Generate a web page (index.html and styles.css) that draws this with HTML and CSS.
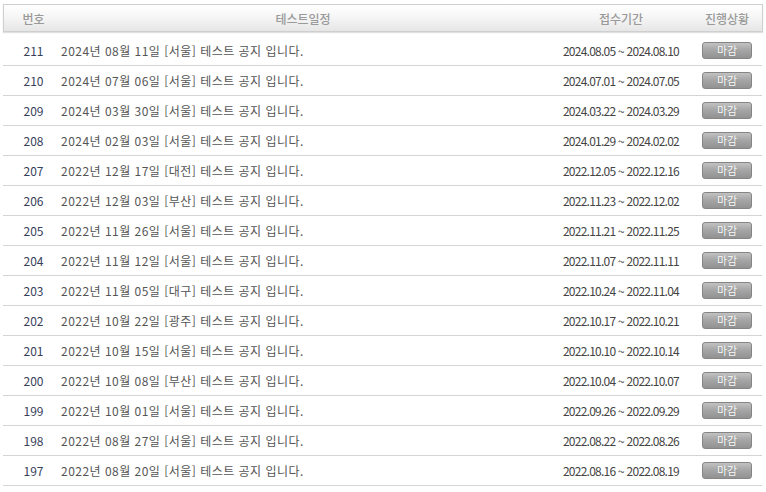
FILE: index.html
```html
<!DOCTYPE html>
<html lang="ko">
<head>
<meta charset="utf-8">
<link rel="stylesheet" href="styles.css">
</head>
<body>
<div class="board">
  <div class="head row-grid">
    <div class="h-no">번호</div>
    <div class="h-title">테스트일정</div>
    <div class="h-date">접수기간</div>
    <div class="h-state">진행상황</div>
  </div>
  <div class="list">
    <div class="row row-grid"><div class="c-no">211</div><div class="c-title">2024년 08월 11일 [서울] 테스트 공지 입니다.</div><div class="c-date">2024.08.05 ~ 2024.08.10</div><div class="c-state"><span class="btn">마감</span></div></div>
    <div class="row row-grid"><div class="c-no">210</div><div class="c-title">2024년 07월 06일 [서울] 테스트 공지 입니다.</div><div class="c-date">2024.07.01 ~ 2024.07.05</div><div class="c-state"><span class="btn">마감</span></div></div>
    <div class="row row-grid"><div class="c-no">209</div><div class="c-title">2024년 03월 30일 [서울] 테스트 공지 입니다.</div><div class="c-date">2024.03.22 ~ 2024.03.29</div><div class="c-state"><span class="btn">마감</span></div></div>
    <div class="row row-grid"><div class="c-no">208</div><div class="c-title">2024년 02월 03일 [서울] 테스트 공지 입니다.</div><div class="c-date">2024.01.29 ~ 2024.02.02</div><div class="c-state"><span class="btn">마감</span></div></div>
    <div class="row row-grid"><div class="c-no">207</div><div class="c-title">2022년 12월 17일 [대전] 테스트 공지 입니다.</div><div class="c-date">2022.12.05 ~ 2022.12.16</div><div class="c-state"><span class="btn">마감</span></div></div>
    <div class="row row-grid"><div class="c-no">206</div><div class="c-title">2022년 12월 03일 [부산] 테스트 공지 입니다.</div><div class="c-date">2022.11.23 ~ 2022.12.02</div><div class="c-state"><span class="btn">마감</span></div></div>
    <div class="row row-grid"><div class="c-no">205</div><div class="c-title">2022년 11월 26일 [서울] 테스트 공지 입니다.</div><div class="c-date">2022.11.21 ~ 2022.11.25</div><div class="c-state"><span class="btn">마감</span></div></div>
    <div class="row row-grid"><div class="c-no">204</div><div class="c-title">2022년 11월 12일 [서울] 테스트 공지 입니다.</div><div class="c-date">2022.11.07 ~ 2022.11.11</div><div class="c-state"><span class="btn">마감</span></div></div>
    <div class="row row-grid"><div class="c-no">203</div><div class="c-title">2022년 11월 05일 [대구] 테스트 공지 입니다.</div><div class="c-date">2022.10.24 ~ 2022.11.04</div><div class="c-state"><span class="btn">마감</span></div></div>
    <div class="row row-grid"><div class="c-no">202</div><div class="c-title">2022년 10월 22일 [광주] 테스트 공지 입니다.</div><div class="c-date">2022.10.17 ~ 2022.10.21</div><div class="c-state"><span class="btn">마감</span></div></div>
    <div class="row row-grid"><div class="c-no">201</div><div class="c-title">2022년 10월 15일 [서울] 테스트 공지 입니다.</div><div class="c-date">2022.10.10 ~ 2022.10.14</div><div class="c-state"><span class="btn">마감</span></div></div>
    <div class="row row-grid"><div class="c-no">200</div><div class="c-title">2022년 10월 08일 [부산] 테스트 공지 입니다.</div><div class="c-date">2022.10.04 ~ 2022.10.07</div><div class="c-state"><span class="btn">마감</span></div></div>
    <div class="row row-grid"><div class="c-no">199</div><div class="c-title">2022년 10월 01일 [서울] 테스트 공지 입니다.</div><div class="c-date">2022.09.26 ~ 2022.09.29</div><div class="c-state"><span class="btn">마감</span></div></div>
    <div class="row row-grid"><div class="c-no">198</div><div class="c-title">2022년 08월 27일 [서울] 테스트 공지 입니다.</div><div class="c-date">2022.08.22 ~ 2022.08.26</div><div class="c-state"><span class="btn">마감</span></div></div>
    <div class="row row-grid"><div class="c-no">197</div><div class="c-title">2022년 08월 20일 [서울] 테스트 공지 입니다.</div><div class="c-date">2022.08.16 ~ 2022.08.19</div><div class="c-state"><span class="btn">마감</span></div></div>
  </div>
</div>
</body>
</html>
```
FILE: styles.css
```css
html, body {
  margin: 0;
  padding: 0;
  background: #fff;
}
body {
  padding: 4px 4px 0 3px;
  font-family: "Noto Sans CJK KR", "Noto Sans", sans-serif;
  font-size: 12px;
  color: #444;
}
.board {
  width: 759px;
}
.row-grid {
  display: grid;
  grid-template-columns: 57px 490px 140px 72px;
  align-items: center;
}
.head {
  height: 26px;
  border: 1px solid #cfcfcf;
  background: linear-gradient(#ffffff 0%, #f6f6f6 45%, #e6e6e6 100%);
  box-shadow: 0 1px 1px rgba(0,0,0,0.12);
  color: #9a9a9a;
  font-weight: 500;
  font-size: 12px;
  margin-right: -1px;
}
.h-no { text-align: center; padding-left: 2px; }
.h-title { text-align: center; padding-right: 6px; }
.h-date { text-align: center; }
.h-state { text-align: center; }
.list {
  margin-top: 4px;
}
.row {
  height: 29px;
  border-bottom: 1px solid #d4d4d4;
}
.c-no { text-align: center; color: #37405a; padding-left: 4px; }
.c-title { padding-left: 1px; color: #555; letter-spacing: 0.48px; white-space: nowrap; }
.c-date { text-align: center; color: #444; letter-spacing: -0.75px; padding-left: 2px; }
.c-state { display: flex; justify-content: center; }
.btn {
  display: inline-flex;
  align-items: center;
  justify-content: center;
  width: 48px;
  height: 15px;
  border: 1px solid #858585;
  border-radius: 3px;
  background: linear-gradient(#c2c2c2 0%, #a6a6a6 45%, #929292 100%);
  color: #fff;
  font-size: 11px;
  line-height: 15px;
  margin-left: 2px;
  text-shadow: 0 0 1px rgba(0,0,0,0.3);
}
```
